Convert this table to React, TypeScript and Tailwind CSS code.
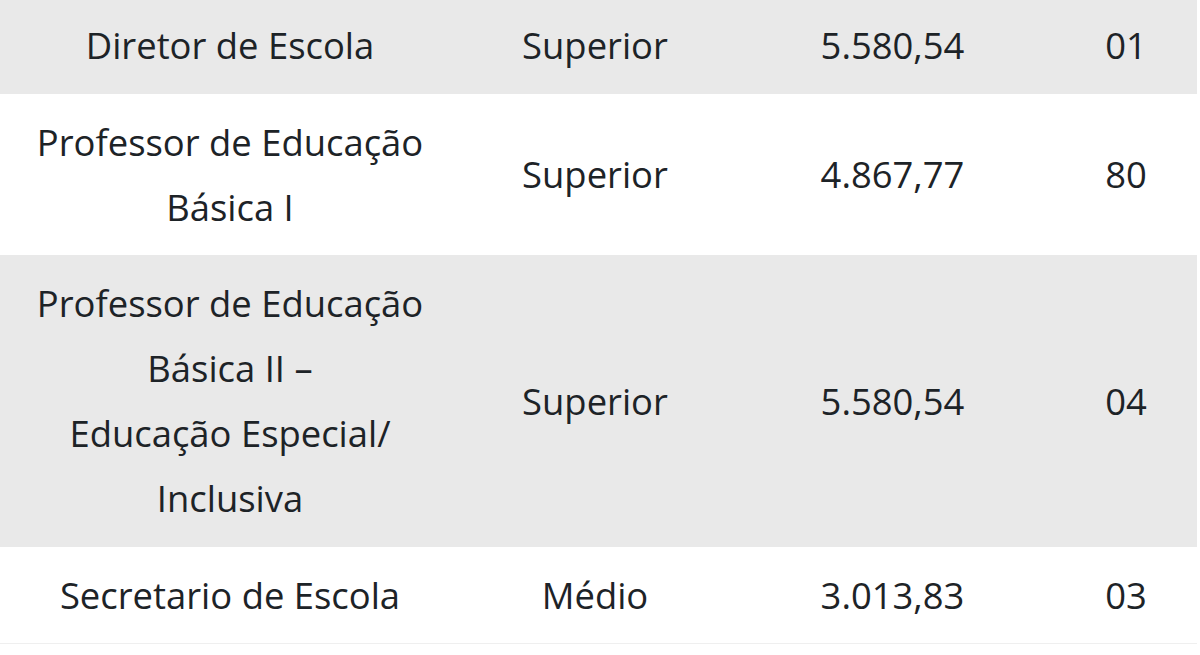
import React from "react";

const rows = [
  { c: ["Diretor de Escola"], n: "Superior", v: "5.580,54", q: "01", gray: true },
  { c: ["Professor de Educação", "Básica I"], n: "Superior", v: "4.867,77", q: "80", gray: false },
  {
    c: ["Professor de Educação", "Básica II –", "Educação Especial/", "Inclusiva"],
    n: "Superior",
    v: "5.580,54",
    q: "04",
    gray: true,
  },
  { c: ["Secretario de Escola"], n: "Médio", v: "3.013,83", q: "03", gray: false },
];

export default function App() {
  return (
    <div
      className="w-[1200px] h-[655px] overflow-hidden bg-white text-[#1d2327] text-[36.4px] leading-[65px]"
      style={{ fontFamily: '"Open Sans", "Noto Sans", sans-serif' }}
    >
      <div className="w-[1197px] -mt-[3px] border-b border-[#efefef]">
        {rows.map((r, i) => (
          <div
            key={i}
            className={`grid grid-cols-[460px_270px_325px_142px] items-center pt-[16px] pb-[15.5px] ${
              r.gray ? "bg-[#e9e9e9]" : "bg-white"
            }`}
          >
            <div className="text-center">
              {r.c.map((l, j) => (
                <div key={j}>{l}</div>
              ))}
            </div>
            <div className="text-center">{r.n}</div>
            <div className="text-center">{r.v}</div>
            <div className="text-center">{r.q}</div>
          </div>
        ))}
      </div>
    </div>
  );
}
